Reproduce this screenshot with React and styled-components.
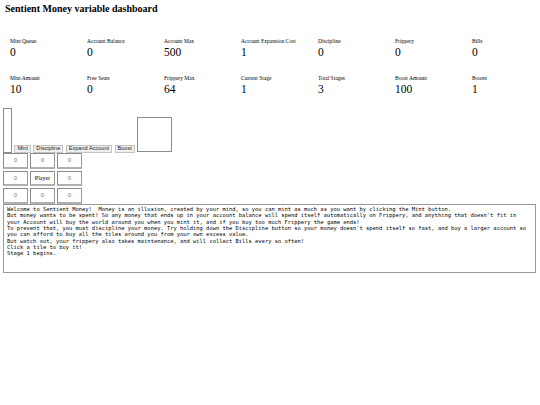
import React from 'react';
import styled, { createGlobalStyle } from 'styled-components';

const GlobalStyle = createGlobalStyle`
  body {
    margin: 3px;
    background: #fff;
    color: #000;
    font-family: "Liberation Serif", "Times New Roman", serif;
  }
`;

const Title = styled.h1`
  margin: 0 0 24px 2px;
  font-size: 10px;
  line-height: 11px;
  font-weight: 700;
`;

// Variable readouts, seven to a row
const StatGrid = styled.div`
  display: grid;
  grid-template-columns: repeat(6, 77px) 1fr;
  row-gap: 17.5px;
`;

const Stat = styled.div`
  padding-left: 7px;
`;

const StatLabel = styled.div`
  font-size: 5.5px;
  line-height: 6px;
`;

const StatValue = styled.div`
  padding-top: 1.5px;
  font-size: 11.5px;
  line-height: 12px;
`;

const Controls = styled.div`
  display: flex;
  align-items: flex-end;
  gap: 2.4px;
  margin-top: 13px;
`;

const Canvas = styled.div`
  box-sizing: border-box;
  width: ${(p) => p.$w}px;
  height: ${(p) => p.$h}px;
  border: 1px solid #8c8c8c;
  background: #fff;
  margin-bottom: ${(p) => p.$lift || 0}px;
`;

const Button = styled.button`
  box-sizing: border-box;
  height: 7.5px;
  padding: 0 2px;
  border: 1px solid #c4c4c4;
  border-radius: 0;
  background: #efefef;
  color: #222;
  font-family: "Liberation Sans", Arial, sans-serif;
  font-size: 5.6px;
  line-height: 5.5px;
`;

const Board = styled.div`
  display: grid;
  grid-template-columns: repeat(3, 25px);
  grid-auto-rows: 15.5px;
  gap: 2px 2px;
  margin-top: 0.5px;
`;

const Tile = styled.button`
  box-sizing: border-box;
  padding: 0;
  border: 1px solid #8a8a8a;
  border-bottom: 2px solid #b0b0b0;
  border-right-color: #9a9a9a;
  background: #fff;
  color: ${(p) => (p.$player ? '#000' : '#6a6a6a')};
  font-family: ${(p) =>
    p.$player ? '"Liberation Serif", serif' : '"Liberation Sans", Arial, sans-serif'};
  font-size: ${(p) => (p.$player ? '6px' : '5.3px')};
`;

const Log = styled.div`
  box-sizing: border-box;
  width: 533px;
  height: 69.5px;
  margin-top: 0;
  padding: 1.5px 3px;
  border: 1px solid #9a9a9a;
  overflow: hidden;
  white-space: pre;
  font-family: "DejaVu Sans Mono", monospace;
  font-size: 5.43px;
  line-height: 6.33px;
`;

const stats = [
  ['Mint Queue', 0],
  ['Account Balance', 0],
  ['Account Max', 500],
  ['Account Expansion Cost', 1],
  ['Discipline', 0],
  ['Frippery', 0],
  ['Bills', 0],
  ['Mint Amount', 10],
  ['Free Seats', 0],
  ['Frippery Max', 64],
  ['Current Stage', 1],
  ['Total Stages', 3],
  ['Boost Amount', 100],
  ['Boosts', 1],
];

const tiles = ['0', '0', '0', '0', 'Player', '0', '0', '0', '0'];

const log = [
  'Welcome to Sentient Money!  Money is an illusion, created by your mind, so you can mint as much as you want by clicking the Mint button.',
  "But money wants to be spent! So any money that ends up in your account balance will spend itself automatically on Frippery, and anything that doesn't fit in",
  'your Account will buy the world around you when you mint it, and if you buy too much Frippery the game ends!',
  "To prevent that, you must discipline your money. Try holding down the Discipline button so your money doesn't spend itself so fast, and buy a larger account so",
  'you can afford to buy all the tiles around you from your own excess value.',
  'But watch out, your frippery also takes maintenance, and will collect Bills every so often!',
  'Click a tile to buy it!',
  'Stage 1 begins.',
].join('\n');

export default function App() {
  return (
    <>
      <GlobalStyle />
      <Title>Sentient Money variable dashboard</Title>

      <StatGrid>
        {stats.map(([label, value]) => (
          <Stat key={label}>
            <StatLabel>{label}</StatLabel>
            <StatValue>{value}</StatValue>
          </Stat>
        ))}
      </StatGrid>

      <Controls>
        <Canvas $w={9} $h={45} />
        <Button>Mint</Button>
        <Button>Discipline</Button>
        <Button>Expand Account</Button>
        <Button>Boost</Button>
        <Canvas $w={35} $h={35} $lift={1} />
      </Controls>

      <Board>
        {tiles.map((t, i) => (
          <Tile key={i} $player={t === 'Player'}>
            {t}
          </Tile>
        ))}
      </Board>

      <Log>{log}</Log>
    </>
  );
}
